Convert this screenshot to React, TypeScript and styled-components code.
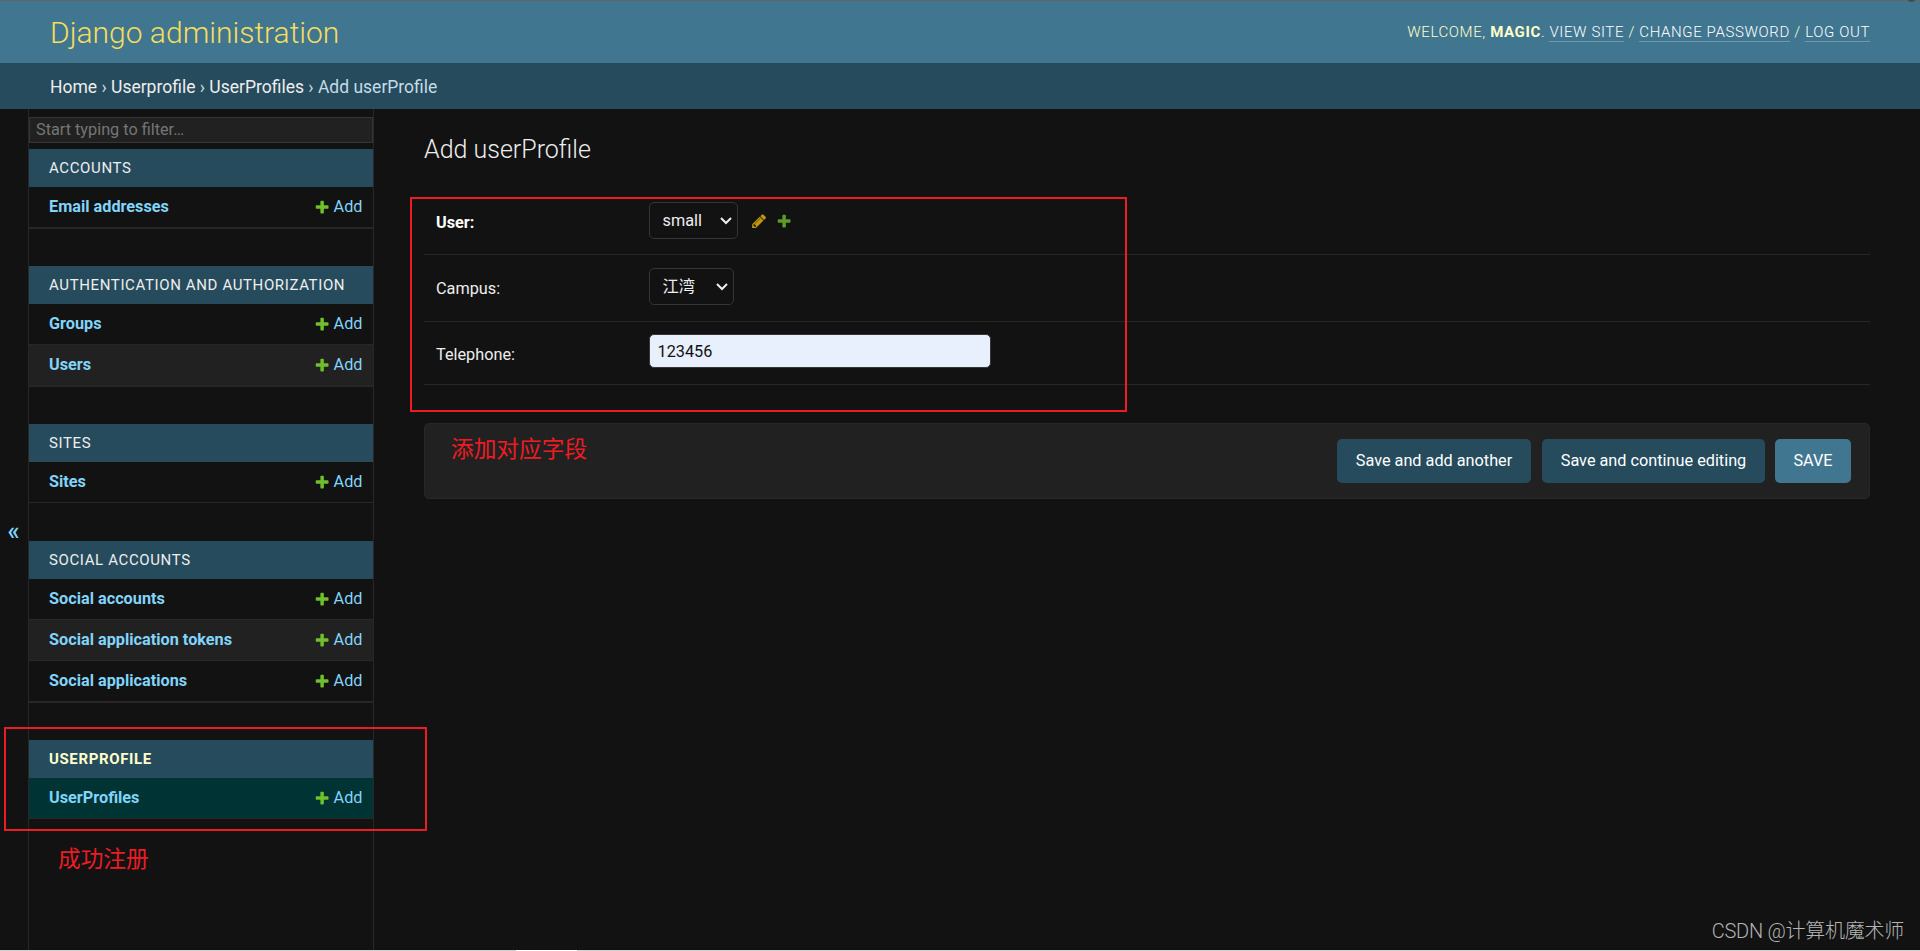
import React from "react";
import styled, { createGlobalStyle, css } from "styled-components";

const Global = createGlobalStyle`
  *, *::before, *::after { box-sizing: border-box; }
  html { background: #121212; color-scheme: dark; }
  body {
    margin: 0;
    background: #121212;
    color: #eeeeee;
    font-family: Roboto, "Noto Sans CJK SC", sans-serif;
    font-size: 16.25px;
    overflow: hidden;
  }
  a { color: inherit; text-decoration: none; }
`;

const Page = styled.div`
  position: relative;
  display: flex;
  flex-direction: column;
  height: 951px;
  border-top: 1px solid #666666;
`;

const BottomEdge = styled.div`
  flex: none;
  height: 1px;
  background: linear-gradient(to right, #d0d0d0 516px, #ffffff 516px 577px, #d0d0d0 577px);
`;

const Knob = styled.span`
  position: absolute;
  top: -7px;
  right: 4px;
  width: 9px;
  height: 8px;
  border-radius: 50%;
  background: #4a4a4a;
`;

const Header = styled.header`
  display: flex;
  align-items: center;
  justify-content: space-between;
  flex: none;
  height: 62px;
  padding: 0 50px;
  background: #417690;
`;

const Brand = styled.h1`
  margin: 0;
  padding-top: 1px;
  color: #f5dd5d;
  font-size: 30px;
  font-weight: 300;
  line-height: 36px;
`;

const UserTools = styled.nav`
  color: #ffffcc;
  font-size: 15px;
  font-weight: 300;
  letter-spacing: 0.625px;
  line-height: 18px;
  text-transform: uppercase;
  white-space: nowrap;

  strong { font-weight: 700; }
`;

const ToolLink = styled.a`
  border-bottom: 1px solid rgba(255, 255, 255, 0.25);
  color: #ffffff;
`;

const Breadcrumbs = styled.nav`
  flex: none;
  height: 46px;
  padding: 14px 50px 0;
  background: #264b5d;
  color: #c4dce8;
  font-size: 17.5px;
  line-height: 20px;
  white-space: nowrap;

  a { color: #eeeeee; }
`;

const Body = styled.div`
  display: flex;
  flex: 1;
  min-height: 0;
`;

const ToggleColumn = styled.button`
  display: flex;
  align-items: center;
  justify-content: center;
  width: 29px;
  padding: 3px 1px 0 0;
  border: 0;
  border-right: 1px solid #272727;
  background: #121212;
  color: #81d4fa;
  font-family: Roboto, sans-serif;
  font-size: 25px;
  font-weight: 500;
  line-height: 25px;
`;

const Sidebar = styled.nav`
  flex: none;
  width: 345px;
  padding-top: 8px;
  border-right: 1px solid #272727;
`;

const Filter = styled.input`
  display: block;
  width: 344px;
  height: 26px;
  margin: 0 0 6px;
  padding: 0 6px 2px;
  border: 1px solid #353535;
  background: #212121;
  color: #eeeeee;
  font-family: Roboto, sans-serif;
  font-size: 16.25px;
  outline: none;

  &::placeholder { color: #757575; }
`;

const AppModule = styled.section<{ $gap: number }>`
  width: 344px;
  margin-bottom: ${(p) => p.$gap}px;
`;

const Caption = styled.h2<{ $current?: boolean }>`
  display: flex;
  align-items: center;
  height: 38px;
  margin: 0;
  padding: 0 20px;
  background: #264b5d;
  color: ${(p) => (p.$current ? "#ffffcc" : "#eeeeee")};
  font-size: 15px;
  font-weight: ${(p) => (p.$current ? 700 : 400)};
  letter-spacing: 0.625px;
  text-transform: uppercase;
`;

const ModelRow = styled.div<{ $tone: "plain" | "striped" | "current"; $thick?: boolean }>`
  display: flex;
  align-items: center;
  justify-content: space-between;
  height: ${(p) => (p.$thick ? 42 : 41)}px;
  padding: 0 10.5px 1px 20px;
  border-bottom: ${(p) => (p.$thick ? 2 : 1)}px solid #272727;
  background: ${(p) =>
    p.$tone === "current" ? "#003333" : p.$tone === "striped" ? "#212121" : "#121212"};
  color: #81d4fa;
  font-size: 16.25px;
`;

const ModelLink = styled.a`
  font-weight: 700;
`;

const AddLink = styled.a`
  display: flex;
  align-items: center;
  gap: 3.5px;

  svg { margin-top: 2px; }
`;

const Content = styled.main`
  flex: 1;
  padding: 26px 50px 0;
`;

const Title = styled.h2`
  margin: 0 0 37px;
  font-size: 25px;
  font-weight: 300;
  line-height: 30px;
`;

const FormRow = styled.div<{ $height: number; $top: number }>`
  display: flex;
  align-items: flex-start;
  height: ${(p) => p.$height}px;
  padding: ${(p) => p.$top}px 12px 0;
  border-bottom: 1px solid #272727;
`;

const Label = styled.label<{ $required?: boolean }>`
  width: 213px;
  padding-top: 11px;
  line-height: 19px;
  ${(p) =>
    p.$required &&
    css`
      color: #ffffff;
      font-weight: 700;
    `}
`;

const SelectBox = styled.div<{ $width: number }>`
  display: grid;
  align-items: center;
  width: ${(p) => p.$width}px;
  height: 37px;

  > * { grid-area: 1 / 1; }

  > svg {
    justify-self: end;
    margin-right: 6px;
    pointer-events: none;
  }
`;

const Select = styled.select`
  appearance: none;
  width: 100%;
  height: 37px;
  padding: 0 12px 1px 12.5px;
  border: 1px solid #353535;
  border-radius: 5px;
  background: #121212;
  color: #eeeeee;
  font-family: Roboto, "Noto Sans CJK SC", sans-serif;
  font-size: 16.25px;
`;

const RelatedLinks = styled.div`
  display: flex;
  align-items: center;
  gap: 9px;
  height: 37px;
  padding: 2px 0 0 13px;
  opacity: 0.8;
`;

const TextInput = styled.input`
  width: 342px;
  height: 34px;
  padding: 0 7.5px;
  border: 1px solid #353535;
  border-radius: 5px;
  background: #e8f0fe;
  color: #121212;
  font-family: Roboto, sans-serif;
  font-size: 16.25px;
  outline: none;
`;

const SubmitRow = styled.div`
  display: flex;
  align-items: center;
  justify-content: flex-end;
  height: 76px;
  margin-top: 38px;
  padding: 0 18px;
  border: 1px solid #272727;
  border-radius: 5px;
  background: #212121;
`;

const SubmitButton = styled.button<{ $primary?: boolean; $width: number }>`
  width: ${(p) => p.$width}px;
  height: 44px;
  margin-left: ${(p) => (p.$primary ? 10 : 11)}px;
  padding: 0 0 1px;
  border: 0;
  border-radius: 5px;
  background: ${(p) => (p.$primary ? "#417690" : "#264b5d")};
  color: #ffffff;
  font-family: Roboto, sans-serif;
  font-size: 16.25px;
  white-space: nowrap;
`;

const Frame = styled.div<{ $x: number; $y: number; $w: number; $h: number }>`
  position: absolute;
  left: ${(p) => p.$x}px;
  top: ${(p) => p.$y - 1}px;
  width: ${(p) => p.$w}px;
  height: ${(p) => p.$h}px;
  border: 2px solid #ed1c24;
  pointer-events: none;
`;

const Note = styled.div<{ $x: number; $y: number }>`
  position: absolute;
  left: ${(p) => p.$x}px;
  top: ${(p) => p.$y - 1}px;
  color: #ed1c24;
  font-family: "Noto Sans CJK SC", sans-serif;
  font-size: 22.7px;
  font-weight: 400;
  line-height: 30px;
  white-space: nowrap;
`;

const Watermark = styled.div`
  position: absolute;
  right: 16px;
  bottom: 6px;
  color: #b4b4b4;
  font-family: Roboto, "Noto Sans CJK SC", sans-serif;
  font-size: 20px;
  font-weight: 300;
  letter-spacing: -0.25px;
  line-height: 28px;
  white-space: nowrap;
`;

const PlusIcon = () => (
  <svg width="16.25" height="16.25" viewBox="0 0 1792 1792" fill="#70bf2b">
    <path d="M1600 796v192q0 40-28 68t-68 28h-416v416q0 40-28 68t-68 28h-192q-40 0-68-28t-28-68v-416h-416q-40 0-68-28t-28-68v-192q0-40 28-68t68-28h416v-416q0-40 28-68t68-28h192q40 0 68 28t28 68v416h416q40 0 68 28t28 68z" />
  </svg>
);

const PencilIcon = () => (
  <svg width="16.25" height="16.25" viewBox="0 0 1792 1792" fill="#efb80b">
    <path d="M491 1536l91-91-235-235-91 91v107h128v128h107zm523-928q0-22-22-22-10 0-17 7l-542 542q-7 7-7 17 0 22 22 22 10 0 17-7l542-542q7-7 7-17zm-54-192l416 416-832 832h-416v-416zm683 96q0 53-37 90l-166 166-416-416 166-165q36-38 90-38 53 0 91 38l235 234q37 39 37 91z" />
  </svg>
);

const Chevron = () => (
  <svg width="12" height="8" viewBox="0 0 12 8" fill="none" stroke="#eeeeee" strokeWidth="2">
    <path d="M1 1l5 5 5-5" />
  </svg>
);

type Model = { name: string; striped?: boolean; current?: boolean };
type App = { label: string; models: Model[]; gap: number; thick?: boolean; current?: boolean };

const apps: App[] = [
  { label: "Accounts", models: [{ name: "Email addresses" }], gap: 37, thick: true },
  {
    label: "Authentication and Authorization",
    models: [{ name: "Groups" }, { name: "Users", striped: true }],
    gap: 37,
    thick: true,
  },
  { label: "Sites", models: [{ name: "Sites" }], gap: 38 },
  {
    label: "Social Accounts",
    models: [
      { name: "Social accounts" },
      { name: "Social application tokens", striped: true },
      { name: "Social applications" },
    ],
    gap: 37,
    thick: true,
  },
  { label: "Userprofile", models: [{ name: "UserProfiles", current: true }], gap: 0, current: true },
];

export default function App() {
  return (
    <Page>
      <Global />
      <Header>
        <Brand>Django administration</Brand>
        <UserTools>
          Welcome, <strong>magic</strong>. <ToolLink href="#">View site</ToolLink> /{" "}
          <ToolLink href="#">Change password</ToolLink> / <ToolLink href="#">Log out</ToolLink>
        </UserTools>
      </Header>
      <Breadcrumbs>
        <a href="#">Home</a> › <a href="#">Userprofile</a> › <a href="#">UserProfiles</a> › Add
        userProfile
      </Breadcrumbs>
      <Body>
        <ToggleColumn aria-label="Toggle navigation">«</ToggleColumn>
        <Sidebar>
          <Filter placeholder="Start typing to filter…" />
          {apps.map((app) => (
            <AppModule key={app.label} $gap={app.gap}>
              <Caption $current={app.current}>{app.label}</Caption>
              {app.models.map((m, i) => (
                <ModelRow
                  key={m.name}
                  $tone={m.current ? "current" : m.striped ? "striped" : "plain"}
                  $thick={app.thick && i === app.models.length - 1}
                >
                  <ModelLink href="#">{m.name}</ModelLink>
                  <AddLink href="#">
                    <PlusIcon />
                    Add
                  </AddLink>
                </ModelRow>
              ))}
            </AppModule>
          ))}
        </Sidebar>
        <Content>
          <Title>Add userProfile</Title>
          <FormRow $height={53} $top={0}>
            <Label $required>User:</Label>
            <SelectBox $width={89}>
              <Select defaultValue="small">
                <option>small</option>
              </Select>
              <Chevron />
            </SelectBox>
            <RelatedLinks>
              <PencilIcon />
              <PlusIcon />
            </RelatedLinks>
          </FormRow>
          <FormRow $height={67} $top={13}>
            <Label>Campus:</Label>
            <SelectBox $width={85}>
              <Select defaultValue="江湾">
                <option>江湾</option>
              </Select>
              <Chevron />
            </SelectBox>
          </FormRow>
          <FormRow $height={63} $top={12}>
            <Label>Telephone:</Label>
            <TextInput defaultValue="123456" />
          </FormRow>
          <SubmitRow>
            <SubmitButton $width={194}>Save and add another</SubmitButton>
            <SubmitButton $width={223}>Save and continue editing</SubmitButton>
            <SubmitButton $width={76} $primary>
              SAVE
            </SubmitButton>
          </SubmitRow>
        </Content>
      </Body>
      <BottomEdge />
      <Knob />
      <Frame $x={410} $y={197} $w={717} $h={215} />
      <Frame $x={4} $y={727} $w={423} $h={104} />
      <Note $x={451} $y={433}>添加对应字段</Note>
      <Note $x={58} $y={843}>成功注册</Note>
      <Watermark>CSDN @计算机魔术师</Watermark>
    </Page>
  );
}
